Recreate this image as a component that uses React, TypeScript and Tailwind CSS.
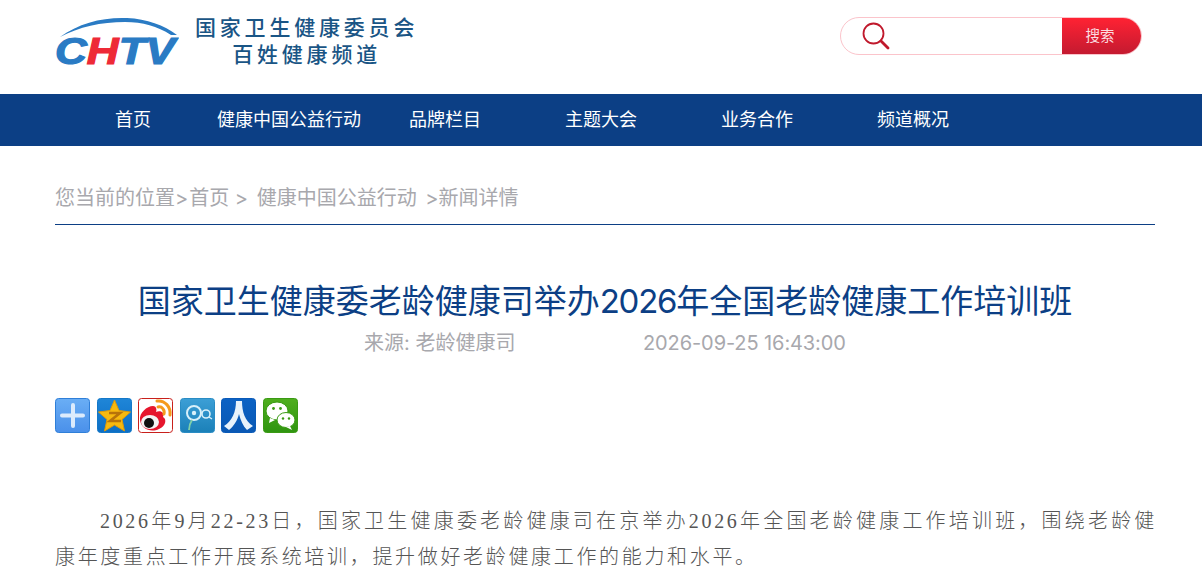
import React from "react";

const NAV = ["首页", "健康中国公益行动", "品牌栏目", "主题大会", "业务合作", "频道概况"];
const YAHEI = "font-['Inter','Noto_Sans_CJK_SC',sans-serif]";

const Logo = () => (
  <svg width="124" height="60" viewBox="0 0 124 60" className="shrink-0">
    <path d="M5 20 C24 6 48 0 72 1 C92 2 109 8 122 18 L116 18 C102 9 88 5 70 5 C46 5 24 10 5 20 Z" fill="#2a7bc4" />
    <text x="0" y="47" fontFamily="Liberation Sans" fontWeight="700" fontStyle="italic" fontSize="37" stroke="#2a7bc4" strokeWidth="1.2" fill="#2a7bc4" textLength="120" lengthAdjust="spacingAndGlyphs">
      C<tspan fill="#ee2a37" stroke="#ee2a37">H</tspan>TV
    </text>
  </svg>
);

const Tile = ({ from, to, border, children }: { from: string; to: string; border: string; children: React.ReactNode }) => (
  <svg width="35" height="35" viewBox="0 0 35 35" className="shrink-0">
    <defs>
      <linearGradient id={from + to} x1="0" y1="0" x2="0" y2="1">
        <stop offset="0" stopColor={from} />
        <stop offset="1" stopColor={to} />
      </linearGradient>
    </defs>
    <rect x="0.5" y="0.5" width="34" height="34" rx="3" fill={`url(#${from + to})`} stroke={border} />
    {children}
  </svg>
);

const ShareIcons = () => (
  <div className="flex gap-[6.5px]">
    <Tile from="#6aaef5" to="#4a90ea" border="#2f7fd8">
      <path d="M18 7 V28 M7 17.5 H28" stroke="#dcebfc" strokeWidth="4" strokeLinecap="round" />
    </Tile>
    <Tile from="#1f86d8" to="#0d6ec4" border="#1478c8">
      <path d="M17.5 2 L22 12.5 L33.5 14 L25 21.5 L27.5 33 L17.5 27 L7.5 33 L10 21.5 L1.5 14 L13 12.5 Z" fill="#f7b90f" stroke="#e09a08" />
      <path d="M12 15 H23 L13 23 H24" fill="none" stroke="#b8730a" strokeWidth="2.6" />
    </Tile>
    <Tile from="#ffffff" to="#ffffff" border="#c8201c">
      <path d="M2 22 C1 15 9 8 15 8 C18 8 19 11 18 14 C23 12 27 15 25 19 C29 21 28 28 21 31 C13 35 3 31 2 22 Z" fill="#e6162d" />
      <ellipse cx="12" cy="24" rx="9" ry="7" fill="#f4f4f4" />
      <circle cx="11" cy="25" r="5" fill="#111" />
      <path d="M19 3 C27 2 33 9 32 17 M20 9 C24 8 27 12 26 16" fill="none" stroke="#f59a1c" strokeWidth="3" strokeLinecap="round" />
    </Tile>
    <Tile from="#3c9fd6" to="#1b80b8" border="#2a8cc4">
      <circle cx="14" cy="15" r="7" fill="none" stroke="#d8f0fa" strokeWidth="2" />
      <circle cx="14" cy="15" r="2.2" fill="#d8f0fa" />
      <path d="M12 22 C10 25 9 28 9 32" fill="none" stroke="#7fd0a8" strokeWidth="1.8" />
      <circle cx="26" cy="16" r="4" fill="none" stroke="#d8f0fa" strokeWidth="1.6" />
      <path d="M29 19 L32 21" stroke="#d8f0fa" strokeWidth="1.4" />
    </Tile>
    <Tile from="#0c62c4" to="#0a58b4" border="#0a5ab8">
      <path d="M15 3 H21 C21 14 24 23 32 28 L26 32 C22 28 19.5 22 18 16 C16.5 22 13 28 8 32 L3 28 C11 23 15 14 15 3 Z" fill="#e8f2fb" />
    </Tile>
    <Tile from="#4fae1e" to="#2f9410" border="#3a9a14">
      <ellipse cx="14" cy="13" rx="11" ry="9" fill="#fff" stroke="#3a9a14" />
      <path d="M7 20 L6 25 L12 22 Z" fill="#fff" />
      <ellipse cx="23" cy="22" rx="9" ry="7.5" fill="#fff" stroke="#3a9a14" />
      <path d="M27 28 L29 32 L23 29 Z" fill="#fff" />
      <circle cx="10.5" cy="10.5" r="1.4" fill="#3a9a14" />
      <circle cx="17.5" cy="10.5" r="1.4" fill="#3a9a14" />
      <circle cx="20" cy="20.5" r="1.2" fill="#3a9a14" />
      <circle cx="26" cy="20.5" r="1.2" fill="#3a9a14" />
    </Tile>
  </div>
);

export default function App() {
  return (
    <div className={`bg-white h-[578px] overflow-hidden ${YAHEI}`}>
      <div className="flex justify-between items-start h-[94px] ml-[55px] w-[1087px]">
        <div className="flex gap-4 pt-[14px]">
          <div className="mt-[3px]"><Logo /></div>
          <div className="text-[#1a5585] font-medium text-[21px] leading-[27px] tracking-[3.8px] text-center">
            <div>国家卫生健康委员会</div>
            <div>百姓健康频道</div>
          </div>
        </div>
        <div className="flex mt-[17px] w-[302px] h-[38px] rounded-[19px] border border-[#fbc4cb] overflow-hidden">
          <div className="flex-1 pl-[21px] flex items-center">
            <svg width="28" height="28" viewBox="0 0 28 28" fill="none" stroke="#c0192c">
              <circle cx="11.5" cy="11.5" r="10" strokeWidth="1.8" />
              <path d="M19 19 L26 26" strokeWidth="2.8" strokeLinecap="round" />
            </svg>
          </div>
          <div className="w-[79px] pr-[3px] bg-gradient-to-b from-[#ff2233] to-[#c41a30] text-[#fbdde0] text-[14.5px] flex items-center justify-center">
            搜索
          </div>
        </div>
      </div>
      <div className="h-[52px] bg-[#0c3f85]">
        <div className="flex ml-[55px]">
          {NAV.map((n) => (
            <div key={n} className="w-[156px] text-center text-white text-lg leading-[52px]">{n}</div>
          ))}
        </div>
      </div>
      <div className="ml-[55px] w-[1100px]">
        <div className="pt-[38px] h-[79px] border-b border-[#0c3f85] text-[#a8a8ad] text-xl leading-7">
          您当前的位置&gt;<span className="ml-[1px]">首页 &gt; </span><span className="ml-[3px]">健康中国公益行动 </span><span className="ml-[3px]">&gt;新闻详情</span>
        </div>
        <h1 className="mt-[53px] text-center text-[#0c3f85] text-[33px] leading-[46px]">
          国家卫生健康委老龄健康司举办<span className="tracking-[-1.2px]">2026</span>年全国老龄健康工作培训班
        </h1>
        <div className="flex mt-[5px] ml-[309px] text-[#a8a8ad] text-xl leading-7">
          <span className="w-[279px]">来源: 老龄健康司</span>
          <span className="tracking-[-0.1px]">2026-09-25 16:43:00</span>
        </div>
        <div className="mt-[41px]">
          <ShareIcons />
        </div>
        <p className="mt-[70px] w-[1102px] text-[#555] font-light text-[20px] leading-9 tracking-[2.67px] indent-[45px] text-justify font-['Liberation_Serif','Noto_Sans_CJK_SC',serif]">
          2026年9月22-23日，国家卫生健康委老龄健康司在京举办2026年全国老龄健康工作培训班，围绕老龄健康年度重点工作开展系统培训，提升做好老龄健康工作的能力和水平。
        </p>
      </div>
    </div>
  );
}
